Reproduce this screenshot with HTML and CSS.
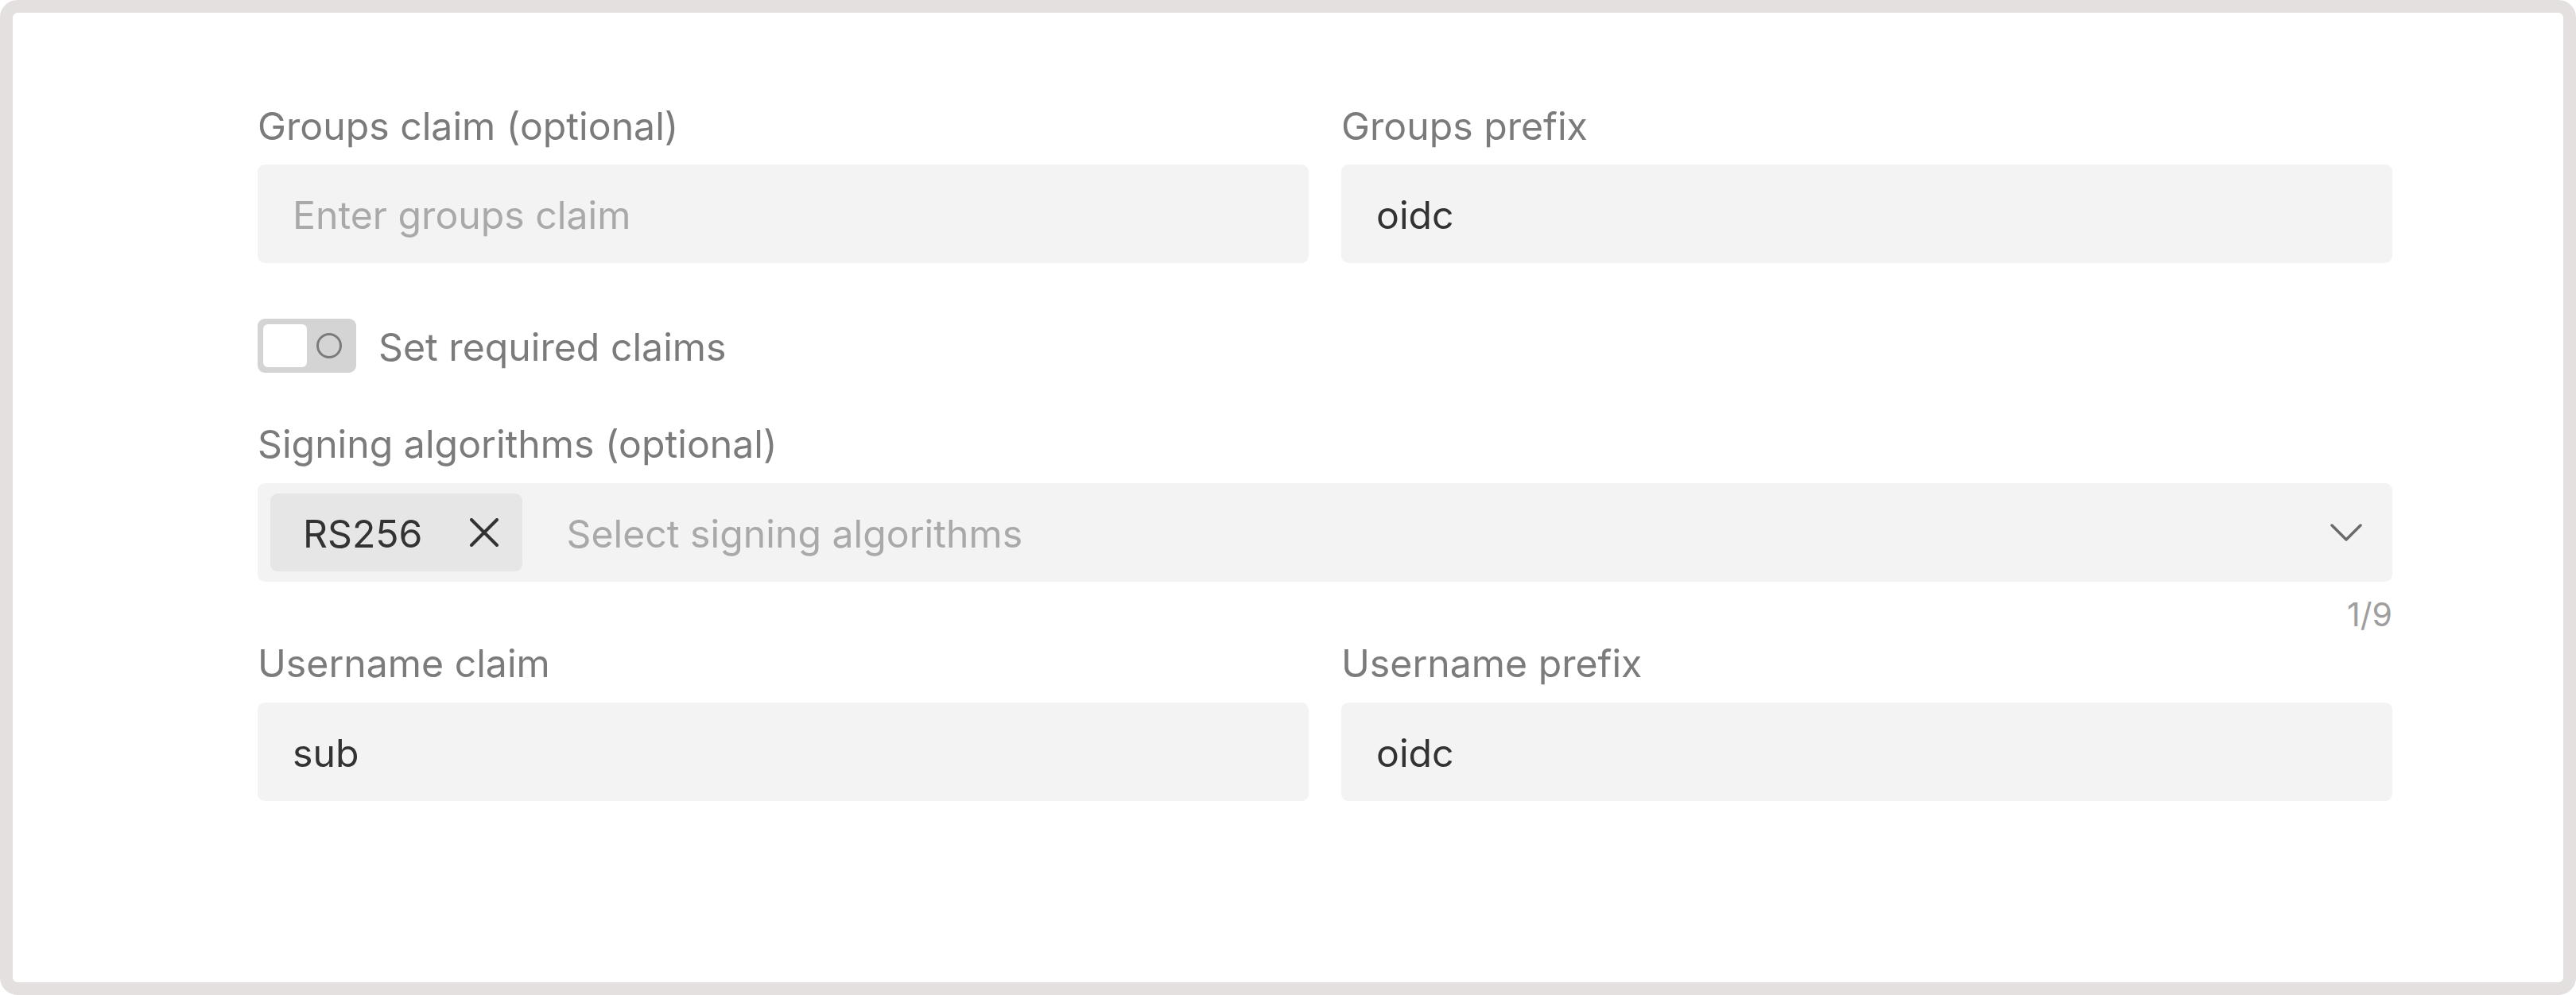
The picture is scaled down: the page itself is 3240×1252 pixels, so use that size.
FILE: index.html
```html
<!DOCTYPE html>
<html lang="en">
<head>
<meta charset="utf-8">
<title>OIDC settings</title>
<link rel="stylesheet" href="styles.css">
</head>
<body>
<div class="frame">
  <div class="form">
    <div class="row">
      <div class="field">
        <label class="label">Groups claim (optional)</label>
        <div class="input"><span class="placeholder">Enter groups claim</span></div>
      </div>
      <div class="field">
        <label class="label">Groups prefix</label>
        <div class="input"><span class="value">oidc</span></div>
      </div>
    </div>

    <div class="toggle-row">
      <div class="toggle">
        <span class="knob"></span>
        <span class="off-mark">
          <svg width="34" height="34" viewBox="0 0 34 34"><circle cx="17" cy="17" r="14.5" fill="none" stroke="#7b7b7b" stroke-width="3"/></svg>
        </span>
      </div>
      <span class="toggle-label">Set required claims</span>
    </div>

    <div class="field wide">
      <label class="label">Signing algorithms (optional)</label>
      <div class="multiselect">
        <div class="chip">
          <span class="chip-text">RS256</span>
          <svg class="chip-x" width="36" height="36" viewBox="0 0 36 36"><path d="M2 2 L34 34 M34 2 L2 34" stroke="#333" stroke-width="4" fill="none" stroke-linecap="round"/></svg>
        </div>
        <span class="placeholder ms-placeholder">Select signing algorithms</span>
        <svg class="chevron" width="40" height="22" viewBox="0 0 40 22"><path d="M2 2 L20 20 L38 2" stroke="#6a6a6a" stroke-width="3.5" fill="none" stroke-linecap="round" stroke-linejoin="round"/></svg>
      </div>
      <div class="counter">1/9</div>
    </div>

    <div class="row row-last">
      <div class="field">
        <label class="label">Username claim</label>
        <div class="input"><span class="value">sub</span></div>
      </div>
      <div class="field">
        <label class="label">Username prefix</label>
        <div class="input"><span class="value">oidc</span></div>
      </div>
    </div>
  </div>
</div>
</body>
</html>
```

FILE: styles.css
```css
* { box-sizing: border-box; }

html, body {
  margin: 0;
  padding: 0;
  background: #ffffff;
}

body {
  font-family: Inter, "Noto Sans", "Liberation Sans", sans-serif;
  font-size: 48.2px;
  color: #333333;
}

.frame {
  width: 3240px;
  height: 1252px;
  border: 16px solid #e3e0df;
  border-radius: 22px;
  background: #ffffff;
  padding: 114px 0 0 308px;
}

.form {
  width: 2685px;
  display: flex;
  flex-direction: column;
}

.row {
  display: grid;
  grid-template-columns: 1fr 1fr;
  column-gap: 41px;
}

.field {
  display: flex;
  flex-direction: column;
}

.label {
  display: block;
  font-size: 48.2px;
  line-height: 58px;
  color: #7b7b7b;
  margin-bottom: 19px;
}

.wide .label { margin-bottom: 20px; }
.row-last .label { margin-bottom: 20px; }

.input {
  height: 124px;
  background: #f3f3f3;
  border-radius: 9px;
  padding: 3px 42px 0 44px;
  display: flex;
  align-items: center;
  line-height: 58px;
}

.value { color: #333333; }

.placeholder { color: #a9a9a9; }

.toggle-row {
  margin-top: 70px;
  height: 68px;
  display: flex;
  align-items: center;
}

.toggle {
  width: 124px;
  height: 68px;
  background: #d4d4d4;
  border-radius: 9px;
  padding: 7px;
  display: flex;
  align-items: center;
}

.knob {
  width: 55px;
  height: 54px;
  background: #ffffff;
  border-radius: 6px;
}

.off-mark {
  flex: 1;
  display: flex;
  justify-content: center;
  align-items: center;
}

.off-mark svg { display: block; }

.toggle-label {
  margin-left: 28px;
  padding-top: 3px;
  color: #7b7b7b;
  line-height: 58px;
}

.wide { margin-top: 61px; }

.multiselect {
  height: 124px;
  background: #f3f3f3;
  border-radius: 9px;
  padding: 0 38px 0 16px;
  display: flex;
  align-items: center;
}

.chip {
  height: 98px;
  background: #e6e6e6;
  border-radius: 9px;
  padding: 0 30px 0 41px;
  display: flex;
  align-items: center;
}

.chip-text {
  color: #333333;
  line-height: 58px;
  padding-top: 3px;
}

.chip-x {
  display: block;
  margin-left: 59px;
  width: 36px;
  height: 36px;
}

.ms-placeholder {
  margin-left: 56px;
  flex: 1;
  line-height: 58px;
  padding-top: 3px;
}

.chevron { display: block; }

.counter {
  margin-top: 17px;
  font-size: 41px;
  line-height: 48px;
  color: #9e9e9e;
  text-align: right;
}

.row-last { margin-top: 9px; }
```
